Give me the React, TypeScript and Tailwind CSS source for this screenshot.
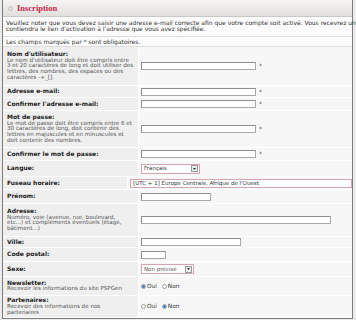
import React from "react";

const Input = ({ w }: { w: string }) => (
  <div className={`h-[8px] border border-[#a8a8a8] border-t-[#8e8e8e] border-l-[#8e8e8e] bg-white ${w}`} />
);

const Star = () => <span className="ml-[3px] text-[6px] leading-[6px] text-[#555]">*</span>;

const Arrow = () => (
  <div className="ml-auto mr-[1px] flex h-[7px] w-[7px] items-center justify-center border border-[#9a9a9a] bg-[#ececec]">
    <svg width="3" height="2" viewBox="0 0 3 2">
      <path d="M0 0H3L1.5 2Z" fill="#333" />
    </svg>
  </div>
);

const Radio = ({ checked }: { checked?: boolean }) => (
  <div className="flex h-[5px] w-[5px] items-center justify-center rounded-full border border-[#9a9a9a] bg-white">
    {checked && <div className="h-[3px] w-[3px] rounded-full bg-[#3f7fd0]" />}
  </div>
);

type RowProps = { h: string; label: string; desc?: string[]; children: React.ReactNode };

const Row = ({ h, label, desc, children }: RowProps) => (
  <div className={`flex border-b border-white ${h}`}>
    <div className="flex w-[136px] flex-col justify-center border-r border-white bg-[#efefef] pl-[4px]">
      <div className="whitespace-nowrap text-[6px] font-bold leading-[6.5px] text-[#222]">{label}</div>
      {desc && (
        <div className="text-[5.6px] leading-[5.8px] text-[#555]">
          {desc.map((d, i) => (
            <div key={i} className="whitespace-nowrap">
              {d}
            </div>
          ))}
        </div>
      )}
    </div>
    <div className="flex flex-1 items-center bg-[#f7f7f7] pl-[2px]">{children}</div>
  </div>
);

export default function App() {
  return (
    <div className="h-[320px] w-[356px] overflow-hidden bg-[#ececec] font-['DejaVu_Sans',sans-serif]">
      <div className="ml-[2px] w-[351px] border-x border-b border-[#7c7c7c] bg-[#fafafa]">
        <div className="flex h-[17px] items-center border-b border-[#c8c8c8] bg-gradient-to-b from-[#f5f4f2] to-[#e1e0dc] pl-[5px]">
          <div className="h-[5px] w-[5px] rounded-full border border-[#c4c4c4] bg-[#e4e4e4]" />
          <span className="ml-[4px] font-['Liberation_Serif',serif] text-[8.5px] font-bold text-[#c4284c]">
            Inscription
          </span>
        </div>
        <div className="h-[20px] whitespace-nowrap border-b border-[#dcdcdc] bg-[#fbfbfb] pl-[3px] pt-[3px] text-[6px] leading-[6px] text-[#333]">
          <div>
            Veuillez noter que vous devez saisir une adresse e-mail correcte afin que votre compte soit activé. Vous recevrez un e-mail qui
          </div>
          <div>contiendra le lien d'activation à l'adresse que vous avez spécifiée.</div>
        </div>
        <div className="flex h-[10px] items-center border-b border-[#dcdcdc] bg-[#fbfbfb] pl-[3px] text-[6px] text-[#333]">
          Les champs marqués par * sont obligatoires.
        </div>

        <Row
          h="h-[39px]"
          label="Nom d'utilisateur:"
          desc={[
            "Le nom d'utilisateur doit être compris entre",
            "3 et 20 caractères de long et doit utiliser des",
            "lettres, des nombres, des espaces ou des",
            "caractères -+_[].",
          ]}
        >
          <Input w="w-[115px]" />
          <Star />
        </Row>
        <Row h="h-[12px]" label="Adresse e-mail:">
          <Input w="w-[115px]" />
          <Star />
        </Row>
        <Row h="h-[13px]" label="Confirmer l'adresse e-mail:">
          <Input w="w-[115px]" />
          <Star />
        </Row>
        <Row
          h="h-[37px]"
          label="Mot de passe:"
          desc={[
            "Le mot de passe doit être compris entre 6 et",
            "30 caractères de long, doit contenir des",
            "lettres en majuscules et en minuscules et",
            "doit contenir des nombres.",
          ]}
        >
          <Input w="w-[115px]" />
          <Star />
        </Row>
        <Row h="h-[13px]" label="Confirmer le mot de passe:">
          <Input w="w-[115px]" />
          <Star />
        </Row>
        <Row h="h-[16px]" label="Langue:">
          <div className="flex h-[10px] w-[59px] items-center border border-[#d6a3ae] bg-white pl-[2px] text-[5.5px] text-[#333]">
            Français
            <Arrow />
          </div>
        </Row>
        <Row h="h-[13px]" label="Fuseau horaire:">
          <div className="flex h-[9px] w-[222px] shrink-0 items-center whitespace-nowrap border border-[#d6a3ae] bg-white pl-[2px] text-[5.5px] text-[#333]">
            [UTC + 1] Europe Centrale, Afrique de l'Ouest
          </div>
        </Row>
        <Row h="h-[14px]" label="Prénom:">
          <Input w="w-[70px]" />
        </Row>
        <Row
          h="h-[33px]"
          label="Adresse:"
          desc={["Numéro, voie (avenue, rue, boulevard,", "etc...) et compléments éventuels (étage,", "bâtiment...)"]}
        >
          <Input w="w-[190px]" />
        </Row>
        <Row h="h-[11px]" label="Ville:">
          <Input w="w-[100px]" />
        </Row>
        <Row h="h-[14px]" label="Code postal:">
          <Input w="w-[25px]" />
        </Row>
        <Row h="h-[15px]" label="Sexe:">
          <div className="flex h-[10px] w-[53px] items-center whitespace-nowrap border border-[#d6a3ae] bg-white pl-[2px] text-[5.5px] text-[#555]">
            Non précisé
            <Arrow />
          </div>
        </Row>
        <Row h="h-[19px]" label="Newsletter:" desc={["Recevoir les informations du site PSPGen"]}>
          <div className="flex items-center text-[5.8px] text-[#333]">
            <Radio checked />
            <span className="ml-[1px]">Oui</span>
            <div className="ml-[5px]">
              <Radio />
            </div>
            <span className="ml-[1px]">Non</span>
          </div>
        </Row>
        <Row h="h-[22px]" label="Partenaires:" desc={["Recevoir des informations de nos", "partenaires"]}>
          <div className="flex items-center text-[5.8px] text-[#333]">
            <Radio />
            <span className="ml-[1px]">Oui</span>
            <div className="ml-[5px]">
              <Radio checked />
            </div>
            <span className="ml-[1px]">Non</span>
          </div>
        </Row>
      </div>
    </div>
  );
}
